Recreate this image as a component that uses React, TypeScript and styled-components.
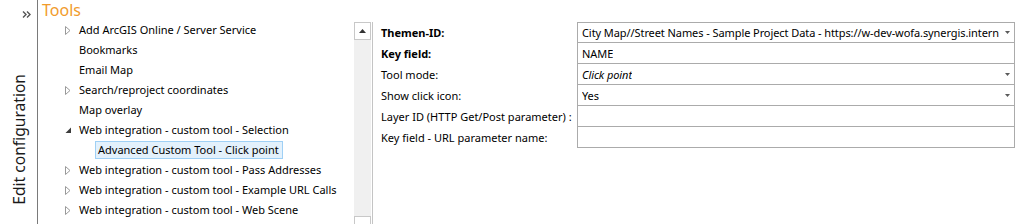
import React from "react";
import styled, { createGlobalStyle } from "styled-components";

const GlobalStyle = createGlobalStyle`
  html, body {
    margin: 0;
    padding: 0;
    background: #ffffff;
  }
  body {
    font-family: "Noto Sans", "Liberation Sans", sans-serif;
    font-size: 11px;
    color: #000;
  }
`;

const Frame = styled.div`
  display: flex;
  width: 1018px;
  height: 224px;
  overflow: hidden;
  background: #fff;
`;

/* linke, eingeklappte Seitenleiste */
const SideRail = styled.div`
  width: 38px;
  flex: 0 0 38px;
  border-right: 1px solid #7a7a7a;
  display: flex;
  flex-direction: column;
  align-items: center;
  justify-content: space-between;
  padding: 11px 0 19px;
  box-sizing: border-box;
`;

const ExpandButton = styled.div`
  align-self: flex-end;
  margin-right: 5px;
  display: flex;
`;

const RailTitle = styled.div`
  writing-mode: vertical-rl;
  transform: rotate(180deg);
  font-size: 15.6px;
  color: #1a1a1a;
  margin-left: 1px;
`;

const Main = styled.div`
  flex: 1;
  display: flex;
  flex-direction: column;
  min-width: 0;
`;

const PageTitle = styled.div`
  height: 20px;
  padding-left: 4px;
  font-size: 16px;
  line-height: 20px;
  color: #f19b2c;
`;

const Body = styled.div`
  flex: 1;
  display: flex;
  min-height: 0;
`;

const Tree = styled.ul`
  list-style: none;
  margin: 0;
  padding: 0;
  width: 316px;
  flex: 0 0 316px;
`;

const TreeRow = styled.li<{ $level: number }>`
  height: 20px;
  display: flex;
  align-items: center;
  padding-left: ${(p) => (p.$level === 1 ? 27 : 57)}px;
  white-space: nowrap;
`;

const Toggle = styled.span`
  width: 14px;
  flex: 0 0 14px;
  display: flex;
  align-items: center;
`;

const NodeLabel = styled.span<{ $selected?: boolean }>`
  display: inline-block;
  height: 18px;
  line-height: 16px;
  box-sizing: border-box;
  padding: 0 3px 0 2px;
  border: 1px solid ${(p) => (p.$selected ? "#9fd0f5" : "transparent")};
  background: ${(p) => (p.$selected ? "#e3f1fc" : "transparent")};
  margin-left: ${(p) => (p.$selected ? "0" : "-3px")};
`;

const ScrollBar = styled.div`
  width: 17px;
  flex: 0 0 17px;
  margin-top: 2px;
  background: #f0f0f0;
  display: flex;
  flex-direction: column;
  justify-content: space-between;
`;

const ScrollButton = styled.div`
  height: 16px;
  flex: 0 0 16px;
  border: 1px solid #c8c8c8;
  background: #fff;
  display: flex;
  align-items: center;
  justify-content: center;
  margin-bottom: -10px;
  &:first-child {
    margin-bottom: 0;
  }
`;

const Divider = styled.div`
  width: 1px;
  flex: 0 0 1px;
  margin: 2px 0 0 1px;
  background: #c4c4c4;
`;

const Form = styled.div`
  flex: 1;
  display: grid;
  grid-template-columns: 204px 438px;
  grid-auto-rows: 21px;
  align-content: start;
  margin-top: 2px;
`;

const FieldLabel = styled.div<{ $bold?: boolean }>`
  padding-left: 8px;
  line-height: 21px;
  font-weight: ${(p) => (p.$bold ? 700 : 400)};
  white-space: nowrap;
`;

const FieldValue = styled.div<{ $first?: boolean; $italic?: boolean }>`
  display: flex;
  align-items: center;
  justify-content: space-between;
  gap: 6px;
  border: 1px solid #ababab;
  border-top-width: ${(p) => (p.$first ? 1 : 0)}px;
  padding: 0 4px 0 4px;
  font-style: ${(p) => (p.$italic ? "italic" : "normal")};
  letter-spacing: -0.08px;
  white-space: nowrap;
  overflow: hidden;

  span {
    overflow: hidden;
  }
  svg {
    flex: 0 0 auto;
  }
`;

const DoubleChevron = () => (
  <svg width="10" height="7" viewBox="0 0 10 7">
    <path d="M1 0.5 L4 3.5 L1 6.5 M5 0.5 L8 3.5 L5 6.5" fill="none" stroke="#555" strokeWidth="1.4" />
  </svg>
);

const HollowArrow = () => (
  <svg width="6" height="9" viewBox="0 0 6 9">
    <polygon points="0.5,0.5 5,4.5 0.5,8.5" fill="#fff" stroke="#9a9a9a" />
  </svg>
);

const OpenArrow = () => (
  <svg width="7" height="7" viewBox="0 0 7 7">
    <polygon points="6,0.5 6,6 0.5,6" fill="#3c3c3c" />
  </svg>
);

const UpCaret = () => (
  <svg width="7" height="4" viewBox="0 0 7 4">
    <polygon points="0,4 3.5,0 7,4" fill="#333" />
  </svg>
);

const DropCaret = () => (
  <svg width="5" height="3" viewBox="0 0 5 3">
    <polygon points="0,0 5,0 2.5,3" fill="#5a5a5a" />
  </svg>
);

type Node = { label: string; level: number; toggle?: "closed" | "open"; selected?: boolean };

const nodes: Node[] = [
  { label: "Add ArcGIS Online / Server Service", level: 1, toggle: "closed" },
  { label: "Bookmarks", level: 1 },
  { label: "Email Map", level: 1 },
  { label: "Search/reproject coordinates", level: 1, toggle: "closed" },
  { label: "Map overlay", level: 1 },
  { label: "Web integration - custom tool - Selection", level: 1, toggle: "open" },
  { label: "Advanced Custom Tool - Click point", level: 2, selected: true },
  { label: "Web integration - custom tool - Pass Addresses", level: 1, toggle: "closed" },
  { label: "Web integration - custom tool - Example URL Calls", level: 1, toggle: "closed" },
  { label: "Web integration - custom tool - Web Scene", level: 1, toggle: "closed" },
];

type Field = { label: string; value: string; bold?: boolean; italic?: boolean; dropdown?: boolean };

const fields: Field[] = [
  {
    label: "Themen-ID:",
    value: "City Map//Street Names - Sample Project Data - https://w-dev-wofa.synergis.intern",
    bold: true,
    dropdown: true,
  },
  { label: "Key field:", value: "NAME", bold: true },
  { label: "Tool mode:", value: "Click point", italic: true, dropdown: true },
  { label: "Show click icon:", value: "Yes", dropdown: true },
  { label: "Layer ID (HTTP Get/Post parameter) :", value: "" },
  { label: "Key field - URL parameter name:", value: "" },
];

const App: React.FC = () => {
  return (
    <>
      <GlobalStyle />
      <Frame>
        <SideRail>
          <ExpandButton>
            <DoubleChevron />
          </ExpandButton>
          <RailTitle>Edit configuration</RailTitle>
        </SideRail>
        <Main>
          <PageTitle>Tools</PageTitle>
          <Body>
            <Tree>
              {nodes.map((n) => (
                <TreeRow key={n.label} $level={n.level}>
                  {n.level === 1 && (
                    <Toggle>
                      {n.toggle === "closed" && <HollowArrow />}
                      {n.toggle === "open" && <OpenArrow />}
                    </Toggle>
                  )}
                  <NodeLabel $selected={n.selected}>{n.label}</NodeLabel>
                </TreeRow>
              ))}
            </Tree>
            <ScrollBar>
              <ScrollButton>
                <UpCaret />
              </ScrollButton>
              <ScrollButton />
            </ScrollBar>
            <Divider />
            <Form>
              {fields.map((f, i) => (
                <React.Fragment key={f.label}>
                  <FieldLabel $bold={f.bold}>{f.label}</FieldLabel>
                  <FieldValue $first={i === 0} $italic={f.italic}>
                    <span>{f.value}</span>
                    {f.dropdown && <DropCaret />}
                  </FieldValue>
                </React.Fragment>
              ))}
            </Form>
          </Body>
        </Main>
      </Frame>
    </>
  );
};

export default App;
